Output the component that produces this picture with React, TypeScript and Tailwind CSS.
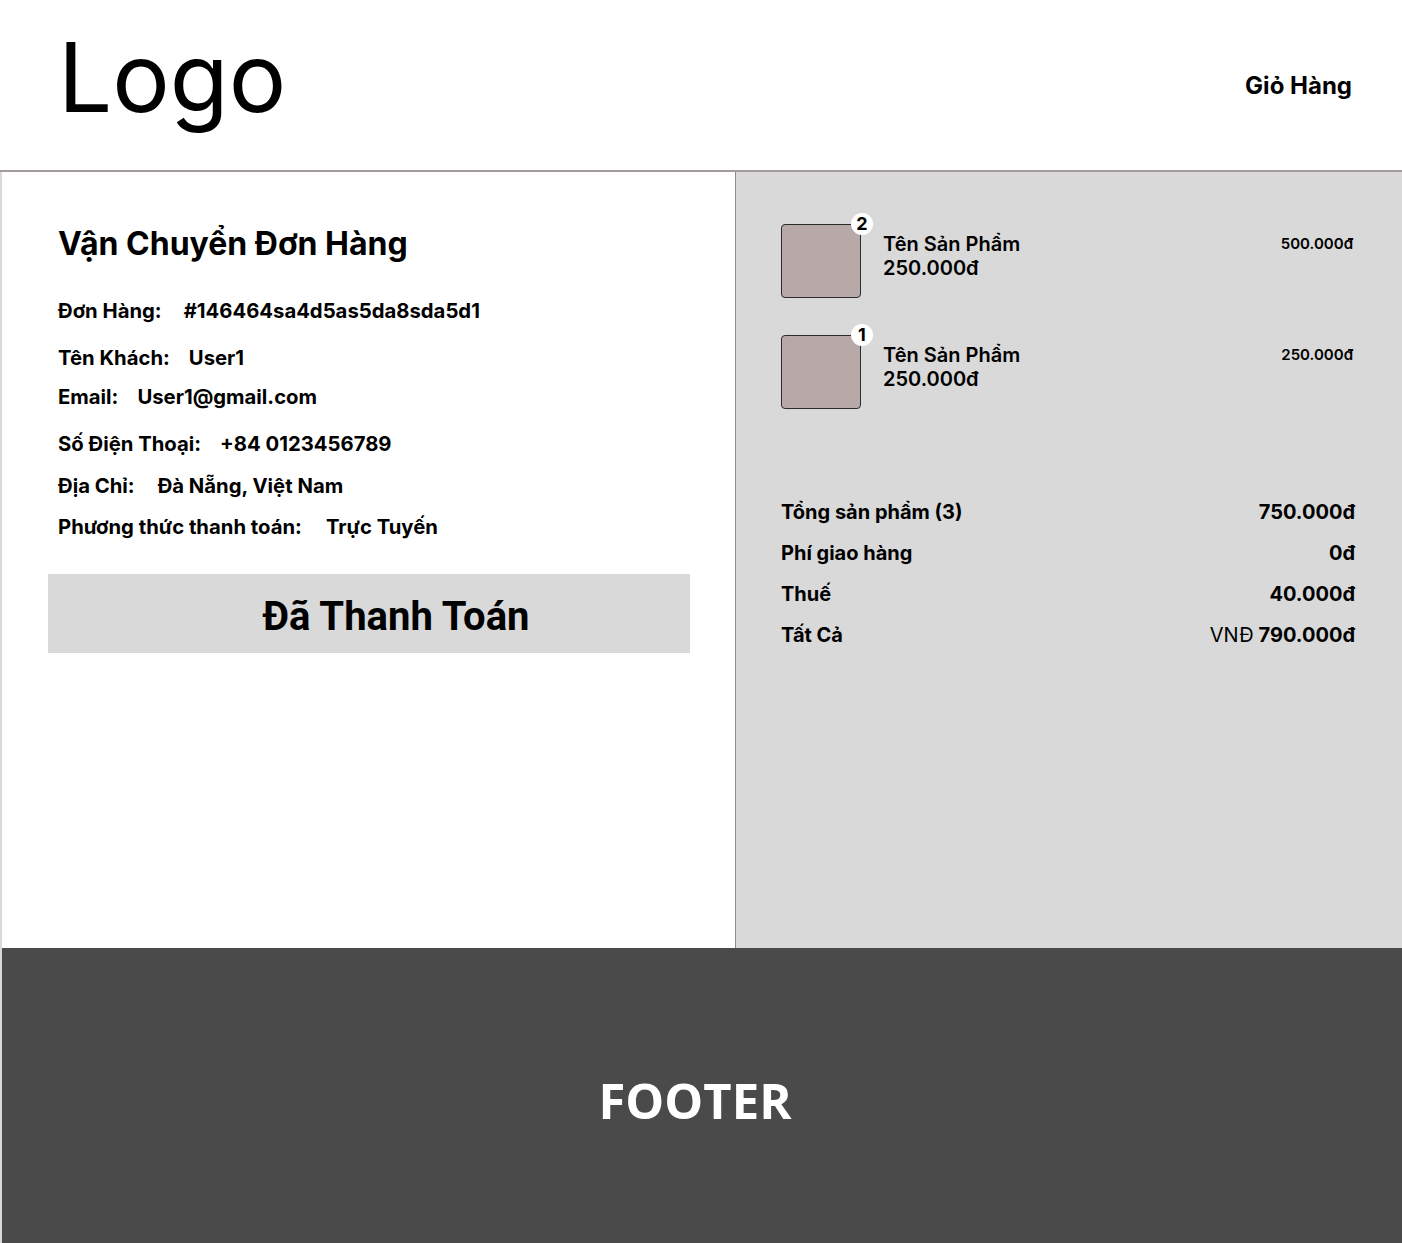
import React from "react";

const inter = { fontFamily: "Inter, 'Noto Sans', sans-serif" };

function Row({ label, value, gap = "ml-[20px]", mt }: { label: string; value: string; gap?: string; mt: string }) {
  return (
    <div className={`flex text-[20.3px] leading-[20px] font-bold text-black ${mt}`}>
      <span>{label}</span>
      <span className={gap}>{value}</span>
    </div>
  );
}

function Item({ qty, price, mt }: { qty: number; price: string; mt: string }) {
  return (
    <div className={`flex items-start ${mt}`}>
      <div className="relative w-[80px] h-[74px] rounded-[4px] border border-[#2b2b2b] bg-[#b8a9a9] shrink-0">
        <div className="absolute -right-[13px] -top-[12px] w-[22px] h-[22px] rounded-full bg-white flex items-center justify-center text-[18px] leading-none font-bold text-black">
          {qty}
        </div>
      </div>
      <div className="ml-[22px] mt-[8px] flex-1 text-[20px] leading-[24px] font-semibold text-black">
        <div>Tên Sản Phẩm</div>
        <div>250.000đ</div>
      </div>
      <div className="mt-[12px] mr-[2px] text-[15px] leading-[15px] font-semibold text-black">{price}</div>
    </div>
  );
}

function SumRow({ label, children }: { label: string; children: React.ReactNode }) {
  return (
    <div className="flex justify-between text-[20px] leading-[24px] font-bold text-black">
      <span>{label}</span>
      <span>{children}</span>
    </div>
  );
}

export default function App() {
  return (
    <div className="w-[1402px] min-h-[1243px] bg-white" style={inter}>
      <header className="h-[172px] border-b-2 border-[#a29b9b] flex items-center justify-between pl-[58px] pr-[50px]">
        <div className="text-[96px] leading-none font-normal text-black mb-[17px]">Logo</div>
        <div className="text-[24px] leading-none font-bold text-black mt-[2px]">Giỏ Hàng</div>
      </header>
      <div className="border-l-2 border-[#d9d9d9]">
        <main className="flex h-[776px]">
          <section className="w-[733px] shrink-0 bg-white pt-[56px]">
            <h1 className="ml-[56px] text-[32px] leading-[32px] font-bold text-black">Vận Chuyển Đơn Hàng</h1>
            <div className="ml-[56px]">
              <Row label="Đơn Hàng:" value="#146464sa4d5as5da8sda5d1" gap="ml-[22px]" mt="mt-[41px]" />
              <Row label="Tên Khách:" value="User1" gap="ml-[19px]" mt="mt-[27px]" />
              <Row label="Email:" value="User1@gmail.com" gap="ml-[19px]" mt="mt-[19px]" />
              <Row label="Số Điện Thoại:" value="+84 0123456789" gap="ml-[19px]" mt="mt-[27px]" />
              <Row label="Địa Chỉ:" value="Đà Nẵng, Việt Nam" gap="ml-[23px]" mt="mt-[22px]" />
              <Row label="Phương thức thanh toán:" value="Trực Tuyến" gap="ml-[24px]" mt="mt-[21px]" />
            </div>
            <div
              className="ml-[46px] mt-[37px] w-[642px] h-[79px] bg-[#d9d9d9] flex items-center justify-center pl-[54px] pt-[7px] text-[40px] leading-none font-bold text-black"
              style={{ fontFamily: "Roboto, 'Liberation Sans', sans-serif" }}
            >
              Đã Thanh Toán
            </div>
          </section>
          <section className="flex-1 bg-[#d9d9d9] border-l border-[#8c8c8c] pl-[45px] pr-[47px] pt-[52px]">
            <Item qty={2} price="500.000đ" mt="" />
            <Item qty={1} price="250.000đ" mt="mt-[37px]" />
            <div className="mt-[91px] flex flex-col gap-[17px]">
              <SumRow label="Tổng sản phẩm (3)">750.000đ</SumRow>
              <SumRow label="Phí giao hàng">0đ</SumRow>
              <SumRow label="Thuế">40.000đ</SumRow>
              <SumRow label="Tất Cả">
                <span className="font-normal">VNĐ</span> <span className="font-bold">790.000đ</span>
              </SumRow>
            </div>
          </section>
        </main>
        <footer className="h-[295px] bg-[#4a4a4a] flex items-center justify-center pt-[9px] pr-[14px]">
          <span
            className="text-[49px] leading-none font-bold text-white"
            style={{ fontFamily: "'Open Sans', 'Noto Sans', sans-serif" }}
          >
            FOOTER
          </span>
        </footer>
      </div>
    </div>
  );
}
